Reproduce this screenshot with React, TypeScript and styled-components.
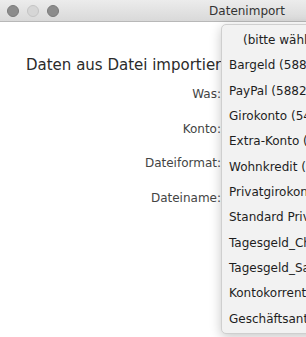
import styled, { createGlobalStyle } from "styled-components";

const Global = createGlobalStyle`
  html, body { margin: 0; padding: 0; background: #ffffff; overflow: hidden; }
  body { font-family: "DejaVu Sans", "Liberation Sans", sans-serif; }
`;

const Window = styled.div`
  position: relative;
  width: 306px;
  height: 337px;
  overflow: hidden;
  background: #ffffff;
`;

const TitleBar = styled.div`
  height: 21px;
  display: flex;
  align-items: center;
  padding-left: 7px;
  gap: 8px;
  background: linear-gradient(#ececec, #d9d9d9);
  border-bottom: 1px solid #b8b8b8;
`;

const Light = styled.span<{ $on: boolean }>`
  width: 12px;
  height: 12px;
  border-radius: 50%;
  box-sizing: border-box;
  background: ${({ $on }) => ($on ? "#8c8c8c" : "#d6d6d6")};
  border: 1px solid ${({ $on }) => ($on ? "#7a7a7a" : "#c4c4c4")};
`;

const WinTitle = styled.span`
  margin-left: auto;
  margin-right: 21px;
  font-size: 12px;
  color: #333333;
`;

const Content = styled.div`
  padding: 34px 0 0 26px;
`;

const Heading = styled.h1`
  margin: 0 0 13px;
  font-size: 15px;
  font-weight: normal;
  color: #2b2b2b;
  white-space: nowrap;
`;

const Labels = styled.div`
  width: 195px;
  display: flex;
  flex-direction: column;
  align-items: flex-end;
  gap: 19.5px;
`;

const Label = styled.span`
  font-size: 12px;
  line-height: 15px;
  color: #444444;
`;

const Menu = styled.div`
  position: absolute;
  left: 221px;
  top: 24px;
  width: 110px;
  height: 310px;
  box-sizing: border-box;
  padding-top: 4px;
  background: #f2f2f2;
  border: 1px solid #cfcfcf;
  border-radius: 5px;
  box-shadow: 0 3px 12px rgba(0, 0, 0, 0.22);
  display: flex;
  flex-direction: column;
`;

const Item = styled.div<{ $placeholder?: boolean }>`
  height: 25.8px;
  line-height: 22px;
  padding-left: ${({ $placeholder }) => ($placeholder ? "21px" : "7px")};
  font-size: 12px;
  color: #1e1e1e;
  white-space: nowrap;
`;

const items = [
  "Bargeld (58800)",
  "PayPal (58820)",
  "Girokonto (54000)",
  "Extra-Konto (54100)",
  "Wohnkredit (55000)",
  "Privatgirokonto",
  "Standard Privatkonto",
  "Tagesgeld_Check",
  "Tagesgeld_Sammel",
  "Kontokorrentkredit",
  "Geschäftsanteile",
];

export default function App() {
  return (
    <Window>
      <Global />
      <TitleBar>
        <Light $on />
        <Light $on={false} />
        <Light $on />
        <WinTitle>Datenimport</WinTitle>
      </TitleBar>
      <Content>
        <Heading>Daten aus Datei importieren</Heading>
        <Labels>
          <Label>Was:</Label>
          <Label>Konto:</Label>
          <Label>Dateiformat:</Label>
          <Label>Dateiname:</Label>
        </Labels>
      </Content>
      <Menu>
        <Item $placeholder>(bitte wählen)</Item>
        {items.map((t) => (
          <Item key={t}>{t}</Item>
        ))}
      </Menu>
    </Window>
  );
}
